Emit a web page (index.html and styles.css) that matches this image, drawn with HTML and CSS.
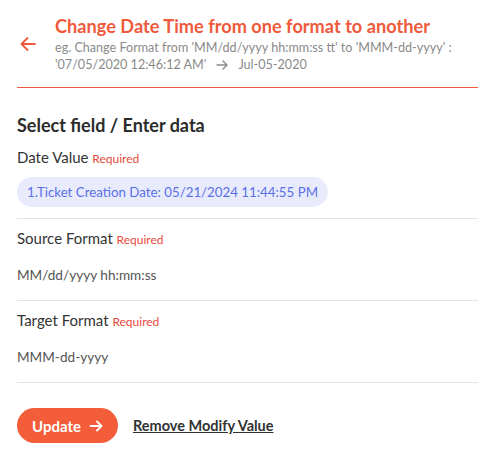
FILE: index.html
```html
<!DOCTYPE html>
<html>
<head>
<meta charset="utf-8">
<link rel="stylesheet" href="styles.css">
</head>
<body>
<div class="panel">
  <header class="header">
    <button class="back" aria-label="Back">
      <svg width="18" height="18" viewBox="0 0 18 18"><path d="M16 9H2.5M8.5 3L2.5 9l6 6" fill="none" stroke="#f05a3c" stroke-width="1.8" stroke-linecap="round" stroke-linejoin="round"/></svg>
    </button>
    <div class="head-text">
      <h1 class="title">Change Date Time from one format to another</h1>
      <p class="sub">eg. Change Format from 'MM/dd/yyyy hh:mm:ss tt' to 'MMM-dd-yyyy' :<br>'07/05/2020 12:46:12 AM' <svg class="sub-arrow" width="12" height="10" viewBox="0 0 12 10"><path d="M1 5h10M7 1l4 4-4 4" fill="none" stroke="#8a8a8a" stroke-width="1.4" stroke-linecap="round" stroke-linejoin="round"/></svg> Jul-05-2020</p>
    </div>
  </header>

  <section class="form">
    <h2 class="section-title">Select field / Enter data</h2>

    <div class="field">
      <div class="label">Date Value <span class="req">Required</span></div>
      <div class="chip">1.Ticket Creation Date: 05/21/2024 11:44:55 PM</div>
    </div>

    <div class="field">
      <div class="label">Source Format <span class="req">Required</span></div>
      <div class="value">MM/dd/yyyy hh:mm:ss</div>
    </div>

    <div class="field">
      <div class="label">Target Format <span class="req">Required</span></div>
      <div class="value">MMM-dd-yyyy</div>
    </div>

    <div class="actions">
      <button class="update">Update <svg width="14" height="12" viewBox="0 0 14 12"><path d="M1.5 6h11M8 1.5L12.5 6 8 10.5" fill="none" stroke="#fff" stroke-width="1.8" stroke-linecap="round" stroke-linejoin="round"/></svg></button>
      <a class="remove" href="#">Remove Modify Value</a>
    </div>
  </section>
</div>
</body>
</html>
```

FILE: styles.css
```css
* { box-sizing: border-box; }
html, body { margin: 0; padding: 0; background: #fff; }
body { font-family: "Lato", "Noto Sans", sans-serif; color: #333; }

.panel { padding: 0 4px 0 17px; }

.header {
  display: flex;
  align-items: center;
  padding: 15px 0 14px 0;
  border-bottom: 1px solid #f05a3c;
}
.back {
  border: 0; background: none; padding: 0; margin: 0 18px 0 2px;
  display: flex; align-items: center; cursor: pointer;
}
.title {
  margin: 0;
  font-size: 18.2px;
  font-weight: 700;
  color: #f05a3c;
  line-height: 22px;
}
.sub {
  margin: 2px 0 0;
  font-size: 12.6px;
  color: #8a8a8a;
  line-height: 17px;
}
.sub-arrow { margin: 0 8px 0 6px; vertical-align: -1px; }

.form { padding-top: 26px; }
.section-title {
  margin: 0 0 7px;
  font-size: 18px;
  font-weight: 700;
  color: #2b2b2b;
  line-height: 22px;
}
.field {
  border-bottom: 1px solid #e3e3ea;
  padding: 4px 0 11px;
}
.field + .field { padding-top: 9px; }
.label { font-size: 15px; color: #333; line-height: 20px; }
.req { font-size: 12px; color: #e84a3a; }
.chip {
  display: inline-block;
  margin-top: 8px;
  background: #e8ebfc;
  color: #5a6fe6;
  font-size: 13.3px;
  border-radius: 16px;
  padding: 0 10px;
  line-height: 30px;
}
.value {
  margin-top: 15px;
  font-size: 13.6px;
  color: #555;
  line-height: 20px;
  padding-bottom: 4px;
}

.actions {
  display: flex;
  align-items: center;
  gap: 15px;
  padding-top: 25px;
}
.update {
  border: 0;
  background: #f45d3a;
  color: #fff;
  font-family: inherit;
  font-weight: 700;
  font-size: 15px;
  height: 35px;
  padding: 0 15px;
  border-radius: 18px;
  display: flex; align-items: center; gap: 8px;
}
.remove {
  font-size: 14.5px;
  font-weight: 700;
  color: #333;
  text-decoration: underline;
}
```
